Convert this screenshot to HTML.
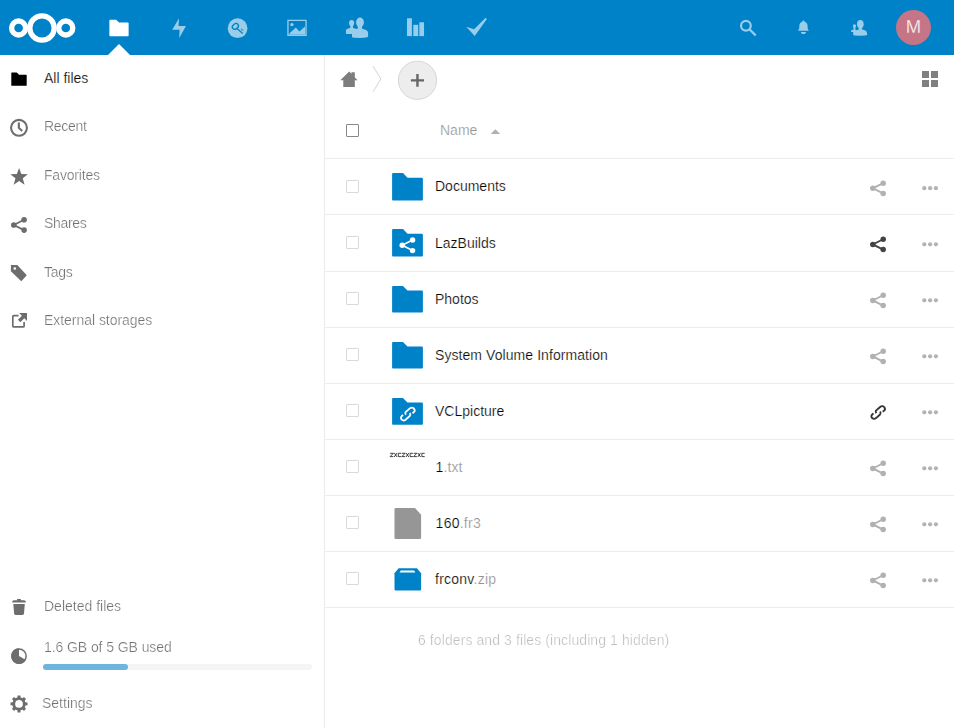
<!DOCTYPE html>
<html lang="en">
<head>
<meta charset="utf-8">
<title>Files - Nextcloud</title>
<style>
*{box-sizing:border-box;margin:0;padding:0}
html,body{width:954px;height:728px;overflow:hidden;background:#fff}
body{font-family:"Liberation Sans",sans-serif;font-size:14px;color:#000;position:relative}
.abs{position:absolute}
#header{position:absolute;left:0;top:0;width:954px;height:55px;background:#0082c9}
#header svg{position:absolute;overflow:visible}
.hi{fill:#fff;opacity:.6}
#tri{position:absolute;left:108px;top:44px;width:0;height:0;border-left:11px solid transparent;border-right:11px solid transparent;border-bottom:11px solid #fff}
#avatar{position:absolute;left:896px;top:10px;width:35px;height:35px;border-radius:50%;background:#c57585;color:#fff;font-size:18.5px;line-height:33px;text-align:center;-webkit-text-stroke:0.3px #c57585}
#nav{position:absolute;left:0;top:55px;width:325px;height:673px;border-right:1px solid #ebebeb;background:#fff}
.nt{position:absolute;left:44px;font-size:14px;line-height:16px;white-space:nowrap;color:#000;opacity:.56;will-change:transform;-webkit-text-stroke:0.22px #fff}
.nt.act{color:#000;opacity:1;will-change:auto}
.g{fill:#6d6d6d}
.line{position:absolute;left:325px;width:629px;height:1px;background:#ededed}
.cb{position:absolute;left:346px;width:13px;height:13px;border:1px solid #dadada;border-radius:1px;background:#fff}
.cb.h{border-color:#888}
.fn{position:absolute;left:435px;font-size:14px;line-height:16px;white-space:nowrap;color:#000;-webkit-text-stroke:0.22px #fff}
.fn i{font-style:normal;color:#8f8f8f}
svg.ic{position:absolute;overflow:visible}
</style>
</head>
<body>
<div id="header">
<svg width="954" height="55" viewBox="0 0 954 55" style="left:0;top:0">
<g fill="none" stroke="#fff" stroke-width="5.3">
<circle cx="42" cy="28" r="12.2"/><circle cx="18.6" cy="28" r="7"/><circle cx="65.8" cy="28" r="7"/>
</g>
<g transform="translate(108 17) scale(1.375)"><path fill="#fff" d="M1.5 2c-.25 0-.5.25-.5.5v11c0 .26.24.5.5.5h13c.26 0 .5-.24.5-.5V4.5c0-.25-.25-.5-.5-.5H8L6.5 2.500C6.250 2.250 6 2 5.750 2z"/></g>
<g class="hi">
<path d="M179 18.2 L172.200 29.700 H179.600 L179.200 38 L186 26 H178.500z"/>
<path fill-rule="evenodd" d="M287.300 19.800H306.700V35.900H287.300z M288.600 21.100V34.600H305.400V21.100z"/>
<circle cx="291.900" cy="24.600" r="1.700"/>
<path d="M289.400 33.600 L295.800 27.600 L299.400 31.600 L305 26.600 V34.400 H289.400z"/>
<rect x="407" y="18.300" width="4.900" height="17.800"/><rect x="413.300" y="24.800" width="4.900" height="11.300"/><rect x="419.350" y="22.300" width="4.700" height="13.800"/>
<path d="M466.200 26.800 L474.100 29.200 L485.600 17.800 L486.900 19.100 L474.700 36z"/>
<path d="M803.450 20.500c-.6 0-1.050.45-1.050 1v.35c-1.950.5-3.100 2.200-3.100 4.350 0 2.600-.35 3.550-1.400 4.500h11.100c-1.050-.95-1.400-1.900-1.400-4.500 0-2.150-1.150-3.850-3.100-4.350v-.35c0-.55-.45-1-1.050-1z"/>
<path d="M800.900 32h5.100c0 1.200-1.100 2.100-2.550 2.100S800.900 33.200 800.900 32z"/>
</g>
<circle cx="237.600" cy="28.200" r="9.850" fill="#99cde9"/>
<g fill="none" stroke="#0082c9" stroke-width="1.300">
<ellipse cx="235.400" cy="26.400" rx="3.300" ry="2.500" transform="rotate(-38 235.400 26.400)"/>
<path d="M237 28.500L242.700 33.500"/>
</g>
<path fill="#0082c9" d="M241 28.200L243.800 30.400L241.300 30.200z"/>
<g class="hi">
<ellipse cx="351.600" cy="23" rx="2.600" ry="3.100"/>
<path d="M350.300 25H353V28L357.700 29.200V34H346.800Q345.900 34 345.900 33.200V30.600Q345.900 28.900 348.300 28.400L350.300 28z"/>
<ellipse cx="360" cy="22.400" rx="3.950" ry="4.800"/>
<path d="M357.700 25H362.100V28.800L365.500 29.800Q368.100 30.800 368.100 33V36.600Q368.100 37.900 360 37.900Q352 37.900 352 37V33Q352 30.500 355 29.600L357.700 28.800z"/>
<ellipse cx="860.350" cy="24.150" rx="3.300" ry="4.050"/>
<path d="M858.800 26H861.900V29.300L864.800 30.300Q867.100 31.300 867.100 33.400V34.800Q867.100 35.700 860.200 35.700Q853.200 35.700 853.200 34.800V31.900H851.600Q851 31.900 851 31.200Q851 30.400 852 30.100L853.500 29.700V27.500H855.400V29.700L856.500 30.300L858.800 29.400z"/>
<ellipse cx="854.450" cy="26.100" rx="1.600" ry="1.950"/>
</g>
<g class="hi" style="fill:none;stroke:#fff"><circle cx="745.900" cy="25.800" r="4.850" stroke-width="2.200"/><path d="M749.600 29.500L755.700 35.300" stroke-width="2.300"/></g>
</svg>
<div id="tri"></div>
<div id="avatar">M</div>
</div>
<div id="nav"></div>
<svg class="ic" width="325" height="728" viewBox="0 0 325 728" style="left:0;top:0">
<g transform="translate(10.2 70.3) scale(1.1)"><path fill="#000" d="M1.5 2c-.25 0-.5.25-.5.5v11c0 .26.24.5.5.5h13c.26 0 .5-.24.5-.5V4.5c0-.25-.25-.5-.5-.5H8L6.5 2.500C6.250 2.250 6 2 5.750 2z"/></g>
<g class="g">
<circle cx="19" cy="127.800" r="7.950" fill="none" stroke="#6d6d6d" stroke-width="2.050"/>
<path d="M17.800 122.500h2.100v4.900l3 2.800-1.400 1.500-3.700-3.400z"/>
<polygon points="19.10,167.90 21.36,174.04 27.90,174.29 22.76,178.34 24.54,184.63 19.10,181.00 13.66,184.63 15.44,178.34 10.30,174.29 16.84,174.04"/>
<circle cx="24.100" cy="219.800" r="2.800"/><circle cx="13.800" cy="224.950" r="2.800"/><circle cx="24.100" cy="230.100" r="2.800"/>
<path d="M24.100 219.800L13.800 224.950L24.100 230.100" fill="none" stroke="#6d6d6d" stroke-width="1.800"/>
<path fill-rule="evenodd" d="M10.900 265.100H17.300L26.800 275.300L21.300 281.200L10.900 271.200z M14.800 267.200a1.300 1.300 0 1 0 0 2.600a1.300 1.300 0 1 0 0-2.600z"/>
<path d="M18.600 315.700H13.800Q12.800 315.700 12.800 316.700V325.900Q12.800 326.900 13.800 326.900H23.100Q24.100 326.900 24.100 325.900V322" fill="none" stroke="#6d6d6d" stroke-width="1.700"/>
<path d="M19.100 313.100H27V320.900L24.300 318.200L20.300 322.200L17.900 319.800L21.900 315.800z"/>
<path d="M12.100 602.600Q12.100 600.200 14 600.200H17.100V599H20.800V600.200H24Q25.900 600.200 25.900 602.600z"/>
<path d="M13.300 604H24.800L24 613.600Q23.900 614.900 22.600 614.900H15.500Q14.200 614.900 14.100 613.600z"/>
<circle cx="19" cy="656.100" r="7.150" fill="none" stroke="#6d6d6d" stroke-width="1.500"/>
<path d="M19 656.100V648.200A7.900 7.900 0 1 0 25.840 660.050z"/>
<polygon points="25.09,702.28 27.48,702.45 27.48,705.35 25.09,705.52 24.45,707.06 26.02,708.86 23.96,710.92 22.16,709.35 20.62,709.99 20.45,712.38 17.55,712.38 17.38,709.99 15.84,709.35 14.04,710.92 11.98,708.86 13.55,707.06 12.91,705.52 10.52,705.35 10.52,702.45 12.91,702.28 13.55,700.74 11.98,698.94 14.04,696.88 15.84,698.45 17.38,697.81 17.55,695.42 20.45,695.42 20.62,697.81 22.16,698.45 23.96,696.88 26.02,698.94 24.45,700.74"/>
<circle cx="19" cy="703.900" r="6.600"/><circle cx="19" cy="703.900" r="3.850" fill="#fff"/>
</g>
</svg>
<div class="nt act" style="top:70px;left:44.0px;letter-spacing:0.00px">All files</div>
<div class="nt" style="top:118px;left:44.0px;letter-spacing:-0.30px">Recent</div>
<div class="nt" style="top:167px;left:44.0px;letter-spacing:-0.20px">Favorites</div>
<div class="nt" style="top:215px;left:44.0px;letter-spacing:-0.30px">Shares</div>
<div class="nt" style="top:264px;left:44.0px;letter-spacing:-0.30px">Tags</div>
<div class="nt" style="top:312px;left:44.0px;letter-spacing:-0.04px">External storages</div>
<div class="nt" style="top:598px;left:44.0px;letter-spacing:0.00px">Deleted files</div>
<div class="nt" style="top:639px;left:44.0px;letter-spacing:-0.08px">1.6 GB of 5 GB used</div>
<div class="nt" style="top:695px;left:42.0px;letter-spacing:0.00px">Settings</div>
<div class="abs" style="left:43px;top:664px;width:269px;height:6px;border-radius:3px;background:#f5f5f5"></div>
<div class="abs" style="left:43px;top:664px;width:85px;height:6px;border-radius:3px;background:#6db5de"></div>

<div class="line" style="top:158px"></div>
<div class="line" style="top:214px"></div>
<div class="line" style="top:271px"></div>
<div class="line" style="top:327px"></div>
<div class="line" style="top:383px"></div>
<div class="line" style="top:439px"></div>
<div class="line" style="top:495px"></div>
<div class="line" style="top:551px"></div>
<div class="line" style="top:607px"></div>
<svg class="ic" width="629" height="673" viewBox="325 55 629 673" style="left:325px;top:55px">
<path fill="#7d7d7d" d="M349.200 71.500L340.300 80.200H343.300V87H354.800V80.200H357.600L354.800 77.400V72.200H351.500V73.800z"/>
<path d="M373 66.100L380.900 79L373 91.900" fill="none" stroke="#d4d4d4" stroke-width="1"/>
<circle cx="417.500" cy="80.300" r="19.100" fill="#ededed" stroke="#d6d6d6" stroke-width="1"/>
<path d="M410.900 80.350H424M417.450 73.900V86.800" stroke="#666" stroke-width="2.400" fill="none"/>
<rect x="922" y="71" width="7" height="7" fill="#808080"/>
<rect x="931" y="71" width="7" height="7" fill="#808080"/>
<rect x="922" y="80" width="7" height="7" fill="#808080"/>
<rect x="931" y="80" width="7" height="7" fill="#808080"/>
<path d="M490.700 134L495.400 129.200L500.100 134z" fill="#b0b0b0"/>
<g transform="translate(389.900 168.517) scale(2.2 2.2917)"><path fill="#0082c9" d="M1.5 2c-.25 0-.5.25-.5.5v11c0 .26.24.5.5.5h13c.26 0 .5-.24.5-.5V4.5c0-.25-.25-.5-.5-.5H8L6.5 2.500C6.250 2.250 6 2 5.750 2z"/></g>
<g fill="#b1b1b1"><circle cx="883.20" cy="183.15" r="2.75"/><circle cx="872.80" cy="188.30" r="2.75"/><circle cx="883.20" cy="193.45" r="2.75"/><path d="M883.20 183.15L872.80 188.30L883.20 193.45" fill="none" stroke="#b1b1b1" stroke-width="1.90"/></g>
<circle cx="924.3" cy="188.20" r="2.100" fill="#b3b3b3"/>
<circle cx="930.1" cy="188.20" r="2.100" fill="#b3b3b3"/>
<circle cx="935.9" cy="188.20" r="2.100" fill="#b3b3b3"/>
<g transform="translate(389.900 224.517) scale(2.2 2.2917)"><path fill="#0082c9" d="M1.5 2c-.25 0-.5.25-.5.5v11c0 .26.24.5.5.5h13c.26 0 .5-.24.5-.5V4.5c0-.25-.25-.5-.5-.5H8L6.5 2.500C6.250 2.250 6 2 5.750 2z"/></g>
<g fill="#444"><circle cx="883.20" cy="239.25" r="2.75"/><circle cx="872.80" cy="244.40" r="2.75"/><circle cx="883.20" cy="249.55" r="2.75"/><path d="M883.20 239.25L872.80 244.40L883.20 249.55" fill="none" stroke="#444" stroke-width="1.90"/></g>
<circle cx="924.3" cy="244.30" r="2.100" fill="#b3b3b3"/>
<circle cx="930.1" cy="244.30" r="2.100" fill="#b3b3b3"/>
<circle cx="935.9" cy="244.30" r="2.100" fill="#b3b3b3"/>
<g transform="translate(389.900 281.683) scale(2.2 2.2083)"><path fill="#0082c9" d="M1.5 2c-.25 0-.5.25-.5.5v11c0 .26.24.5.5.5h13c.26 0 .5-.24.5-.5V4.5c0-.25-.25-.5-.5-.5H8L6.5 2.500C6.250 2.250 6 2 5.750 2z"/></g>
<g fill="#b1b1b1"><circle cx="883.20" cy="295.25" r="2.75"/><circle cx="872.80" cy="300.40" r="2.75"/><circle cx="883.20" cy="305.55" r="2.75"/><path d="M883.20 295.25L872.80 300.40L883.20 305.55" fill="none" stroke="#b1b1b1" stroke-width="1.90"/></g>
<circle cx="924.3" cy="300.30" r="2.100" fill="#b3b3b3"/>
<circle cx="930.1" cy="300.30" r="2.100" fill="#b3b3b3"/>
<circle cx="935.9" cy="300.30" r="2.100" fill="#b3b3b3"/>
<g transform="translate(389.900 337.683) scale(2.2 2.2083)"><path fill="#0082c9" d="M1.5 2c-.25 0-.5.25-.5.5v11c0 .26.24.5.5.5h13c.26 0 .5-.24.5-.5V4.5c0-.25-.25-.5-.5-.5H8L6.5 2.500C6.250 2.250 6 2 5.750 2z"/></g>
<g fill="#b1b1b1"><circle cx="883.20" cy="351.25" r="2.75"/><circle cx="872.80" cy="356.40" r="2.75"/><circle cx="883.20" cy="361.55" r="2.75"/><path d="M883.20 351.25L872.80 356.40L883.20 361.55" fill="none" stroke="#b1b1b1" stroke-width="1.90"/></g>
<circle cx="924.3" cy="356.30" r="2.100" fill="#b3b3b3"/>
<circle cx="930.1" cy="356.30" r="2.100" fill="#b3b3b3"/>
<circle cx="935.9" cy="356.30" r="2.100" fill="#b3b3b3"/>
<g transform="translate(389.900 393.650) scale(2.2 2.2250)"><path fill="#0082c9" d="M1.5 2c-.25 0-.5.25-.5.5v11c0 .26.24.5.5.5h13c.26 0 .5-.24.5-.5V4.5c0-.25-.25-.5-.5-.5H8L6.5 2.500C6.250 2.250 6 2 5.750 2z"/></g>
<g transform="translate(878.10 412.50) scale(0.890)" fill="none" stroke="#333" stroke-width="2.10"><path d="M-2.100 0.800C-2.800 -0.400 -3 -1.400 -2.400 -2.100L2.300 -6.200C4 -7.600 6 -7.400 7 -5.900C8 -4.400 7.800 -2.900 6.800 -2.100L5.200 -0.800"/><path d="M-5.200 1L-6.800 2.500C-7.800 3.600 -7.800 5.200 -6.700 6.200C-5.500 7.300 -3.700 7.400 -2.300 6.300L2.200 2.200C3 1.400 3 0.100 2.300 -1.100"/></g>
<circle cx="924.3" cy="412.30" r="2.100" fill="#b3b3b3"/>
<circle cx="930.1" cy="412.30" r="2.100" fill="#b3b3b3"/>
<circle cx="935.9" cy="412.30" r="2.100" fill="#b3b3b3"/>
<g fill="#b1b1b1"><circle cx="883.20" cy="463.25" r="2.75"/><circle cx="872.80" cy="468.40" r="2.75"/><circle cx="883.20" cy="473.55" r="2.75"/><path d="M883.20 463.25L872.80 468.40L883.20 473.55" fill="none" stroke="#b1b1b1" stroke-width="1.90"/></g>
<circle cx="924.3" cy="468.30" r="2.100" fill="#b3b3b3"/>
<circle cx="930.1" cy="468.30" r="2.100" fill="#b3b3b3"/>
<circle cx="935.9" cy="468.30" r="2.100" fill="#b3b3b3"/>
<g fill="#b1b1b1"><circle cx="883.20" cy="519.25" r="2.75"/><circle cx="872.80" cy="524.40" r="2.75"/><circle cx="883.20" cy="529.55" r="2.75"/><path d="M883.20 519.25L872.80 524.40L883.20 529.55" fill="none" stroke="#b1b1b1" stroke-width="1.90"/></g>
<circle cx="924.3" cy="524.30" r="2.100" fill="#b3b3b3"/>
<circle cx="930.1" cy="524.30" r="2.100" fill="#b3b3b3"/>
<circle cx="935.9" cy="524.30" r="2.100" fill="#b3b3b3"/>
<g fill="#b1b1b1"><circle cx="883.20" cy="575.25" r="2.75"/><circle cx="872.80" cy="580.40" r="2.75"/><circle cx="883.20" cy="585.55" r="2.75"/><path d="M883.20 575.25L872.80 580.40L883.20 585.55" fill="none" stroke="#b1b1b1" stroke-width="1.90"/></g>
<circle cx="924.3" cy="580.30" r="2.100" fill="#b3b3b3"/>
<circle cx="930.1" cy="580.30" r="2.100" fill="#b3b3b3"/>
<circle cx="935.9" cy="580.30" r="2.100" fill="#b3b3b3"/>
<g fill="#fff"><circle cx="412.60" cy="240.00" r="2.70"/><circle cx="402.20" cy="245.30" r="2.70"/><circle cx="412.60" cy="250.60" r="2.70"/><path d="M412.60 240.00L402.20 245.30L412.60 250.60" fill="none" stroke="#fff" stroke-width="1.65"/></g>
<g transform="translate(407.75 414.00) scale(0.900)" fill="none" stroke="#fff" stroke-width="2.00"><path d="M-2.100 0.800C-2.800 -0.400 -3 -1.400 -2.400 -2.100L2.300 -6.200C4 -7.600 6 -7.400 7 -5.900C8 -4.400 7.800 -2.900 6.800 -2.100L5.200 -0.800"/><path d="M-5.200 1L-6.800 2.500C-7.800 3.600 -7.800 5.200 -6.700 6.200C-5.500 7.300 -3.700 7.400 -2.300 6.300L2.200 2.200C3 1.400 3 0.100 2.300 -1.100"/></g>
<path fill="#969696" d="M395.600 508.100H415L421.100 514.700V537.900Q421.100 539 420 539H395.600Q394.500 539 394.500 537.900V509.200Q394.500 508.100 395.600 508.100z"/>
<path fill="#0082c9" d="M398.600 568.200H417L421.100 573.200V589.500Q421.100 590.500 420.100 590.500H395.500Q394.500 590.500 394.500 589.500V573.200z"/>
<path d="M400.800 570.600H414L415.400 572.600H399.500z" fill="#fff"/>
</svg>
<div class="cb h" style="top:124px"></div>
<div class="cb" style="top:180px"></div>
<div class="cb" style="top:236px"></div>
<div class="cb" style="top:292px"></div>
<div class="cb" style="top:348px"></div>
<div class="cb" style="top:404px"></div>
<div class="cb" style="top:460px"></div>
<div class="cb" style="top:516px"></div>
<div class="cb" style="top:572px"></div>
<div class="fn" style="left:440px;top:122px;color:#959595">Name</div>
<div class="fn" style="left:435.0px;top:178px;letter-spacing:0.00px">Documents</div>
<div class="fn" style="left:435.0px;top:235px;letter-spacing:0.00px">LazBuilds</div>
<div class="fn" style="left:435.0px;top:291px;letter-spacing:0.00px">Photos</div>
<div class="fn" style="left:435.0px;top:347px;letter-spacing:0.07px">System Volume Information</div>
<div class="fn" style="left:435.0px;top:403px;letter-spacing:0.00px">VCLpicture</div>
<div class="fn" style="left:435.6px;top:459px;letter-spacing:0.10px">1<i>.txt</i></div>
<div class="fn" style="left:435.6px;top:515px;letter-spacing:0.25px">160<i>.fr3</i></div>
<div class="fn" style="left:435.0px;top:571px;letter-spacing:0.24px">frconv<i>.zip</i></div>
<svg class="ic" width="44" height="14" viewBox="386 448 44 14" style="left:386px;top:448px"><path d="M390.10 453.30H393.35L390.10 456.60H393.35M394.22 452.90L397.07 457.00M397.07 452.90L394.22 457.00M401.19 453.30H398.34V456.60H401.19M401.86 453.30H405.11L401.86 456.60H405.11M405.98 452.90L408.83 457.00M408.83 452.90L405.98 457.00M412.95 453.30H410.10V456.60H412.95M413.62 453.30H416.87L413.62 456.60H416.87M417.74 452.90L420.59 457.00M420.59 452.90L417.74 457.00M424.71 453.30H421.86V456.60H424.71" fill="none" stroke="#222" stroke-width="0.85"/></svg>
<div class="fn" style="left:418px;top:632px;color:#000;opacity:.25;will-change:transform;letter-spacing:0.09px">6 folders and 3 files (including 1 hidden)</div>
</body>
</html>
